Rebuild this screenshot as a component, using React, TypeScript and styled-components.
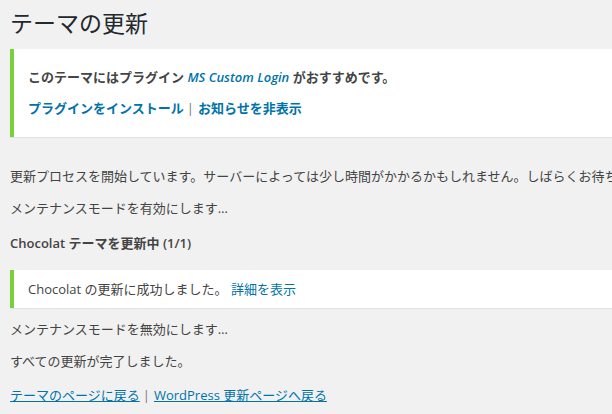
import React from "react";
import styled, { createGlobalStyle } from "styled-components";

const GlobalStyle = createGlobalStyle`
  html, body {
    margin: 0;
    padding: 0;
    background: #f1f1f1;
    overflow: hidden;
  }
  body {
    font-family: "Open Sans", "Noto Sans CJK JP", sans-serif;
    font-size: 13px;
    color: #444;
  }
`;

const Wrap = styled.div`
  display: flex;
  flex-direction: column;
  width: 900px;
  padding-left: 10px;
`;

const Title = styled.h1`
  margin: 0;
  padding: 9px 0 0;
  height: 40px;
  box-sizing: border-box;
  font-size: 23px;
  line-height: 29px;
  font-weight: 400;
  color: #23282d;
`;

const Notice = styled.div<{ $pad: string; $gap?: number; $mt?: number }>`
  display: flex;
  flex-direction: column;
  gap: ${(p) => p.$gap ?? 0}px;
  margin-top: ${(p) => p.$mt ?? 0}px;
  padding: ${(p) => p.$pad};
  background: #fff;
  border-left: 4px solid #7ad03a;
  box-shadow: 0 1px 1px rgba(0, 0, 0, 0.06);
`;

const Line = styled.div<{ $mt?: number; $bold?: boolean }>`
  margin-top: ${(p) => p.$mt ?? 0}px;
  line-height: 20px;
  height: 20px;
  white-space: nowrap;
  font-weight: ${(p) => (p.$bold ? 600 : 400)};
`;

const Link = styled.a<{ $italic?: boolean; $underline?: boolean }>`
  color: #0073aa;
  font-style: ${(p) => (p.$italic ? "italic" : "normal")};
  text-decoration: ${(p) => (p.$underline ? "underline" : "none")};
`;

const Sep = styled.span`
  color: #777;
  font-weight: 400;
  margin: 0 4px 0 3px;
`;

export default function App() {
  return (
    <>
      <GlobalStyle />
      <Wrap>
        <Title>テーマの更新</Title>
        <Notice $mt={9} $pad="18px 14px 19px" $gap={11}>
          <Line $bold>
            このテーマにはプラグイン <Link href="#" $italic>MS Custom Login</Link> がおすすめです。
          </Line>
          <Line $bold>
            <Link href="#">プラグインをインストール</Link>
            <Sep>|</Sep>
            <Link href="#">お知らせを非表示</Link>
          </Line>
        </Notice>
        <Line $mt={29}>
          更新プロセスを開始しています。サーバーによっては少し時間がかかるかもしれません。しばらくお待ちください。
        </Line>
        <Line $mt={12}>メンテナンスモードを有効にします…</Line>
        <Line $mt={15} $bold>Chocolat テーマを更新中 (1/1)</Line>
        <Notice $mt={17} $pad="9px 14px">
          <Line>
            Chocolat の更新に成功しました。 <Link href="#">詳細を表示</Link>
          </Line>
        </Notice>
        <Line $mt={11}>メンテナンスモードを無効にします…</Line>
        <Line $mt={12}>すべての更新が完了しました。</Line>
        <Line $mt={14}>
          <Link href="#" $underline>テーマのページに戻る</Link>
          <Sep>|</Sep>
          <Link href="#" $underline>WordPress 更新ページへ戻る</Link>
        </Line>
      </Wrap>
    </>
  );
}
